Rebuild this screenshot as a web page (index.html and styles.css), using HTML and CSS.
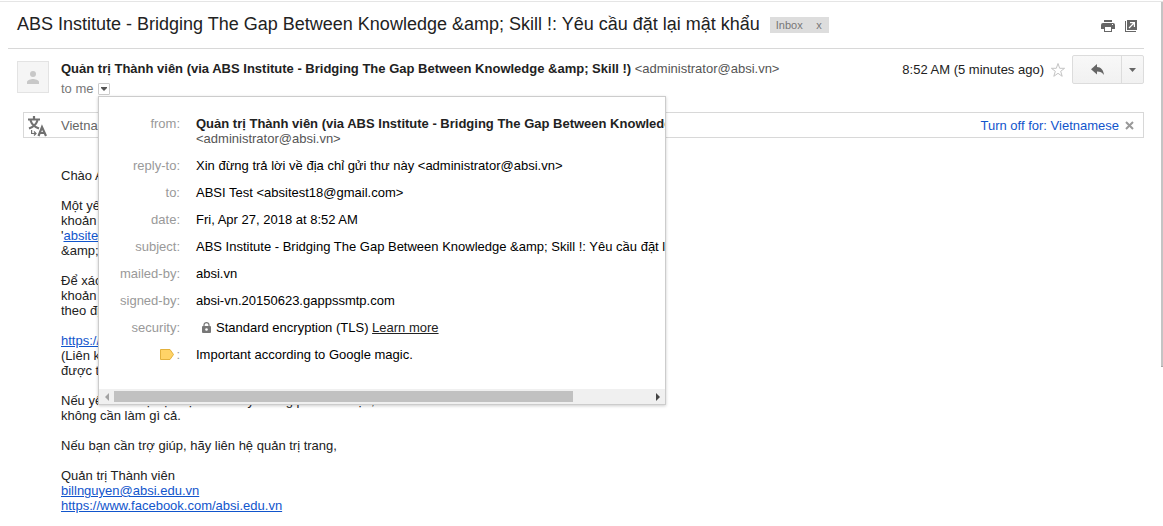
FILE: index.html
```html
<!DOCTYPE html>
<html lang="en">
<head>
<meta charset="utf-8">
<title>Mail message</title>
<link rel="stylesheet" href="styles.css">
</head>
<body>
<div class="pane">
<main class="thread">
  <header class="subject-bar">
    <h1 class="subject">ABS Institute - Bridging The Gap Between Knowledge &amp;amp; Skill !: Yêu cầu đặt lại mật khẩu</h1>
    <span class="label">Inbox <button class="label-remove" type="button" aria-label="Remove label">x</button></span>
    <div class="tools">
      <button class="icon-button" type="button" aria-label="Print">
        <svg width="14" height="12" viewBox="0 0 14 12"><path fill="#666" d="M3 0h8v2H3zM2 3h10a2 2 0 0 1 2 2v4h-3V6H3v3H0V5a2 2 0 0 1 2-2z"/><path fill="#fff" d="M11 4h1v1h-1z"/><path fill="#666" fill-rule="evenodd" d="M3 6h8v6H3zM4 7v4h6V7z"/></svg>
      </button>
      <button class="icon-button" type="button" aria-label="Open in new window">
        <svg width="12" height="12" viewBox="0 0 12 12"><path fill="#666" d="M0 1h1v10h10v1H0zM2 0h10v10H2z"/><path fill="none" stroke="#fff" stroke-width="1.2" d="M4 8l5-5M5 2.6h4.4V7"/></svg>
      </button>
    </div>
  </header>

  <section class="message">
    <div class="avatar">
      <svg width="12" height="13" viewBox="0 0 12 13"><circle cx="6" cy="3" r="3" fill="#c8c8c8"/><path fill="#c8c8c8" d="M0 13v-2c0-2 4-3 6-3s6 1 6 3v2z"/></svg>
    </div>
    <div class="sender">
      <div class="sender-line"><b>Quản trị Thành viên (via ABS Institute - Bridging The Gap Between Knowledge &amp;amp; Skill !)</b> <span class="address">&lt;administrator@absi.vn&gt;</span></div>
      <div class="recipient">to me
        <button class="details-toggle" type="button" aria-label="Show details"><svg width="6" height="4" viewBox="0 0 6 4"><path fill="#555" d="M0 0h6v1L3 4 0 1z"/></svg></button>
        <div class="details">
          <dl class="fields">
            <dt>from:</dt><dd><b>Quản trị Thành viên (via ABS Institute - Bridging The Gap Between Knowledge &amp;amp; Skill !)</b><br><span class="address">&lt;administrator@absi.vn&gt;</span></dd>
            <dt>reply-to:</dt><dd>Xin đừng trả lời về địa chỉ gửi thư này &lt;administrator@absi.vn&gt;</dd>
            <dt>to:</dt><dd>ABSI Test &lt;absitest18@gmail.com&gt;</dd>
            <dt>date:</dt><dd>Fri, Apr 27, 2018 at 8:52 AM</dd>
            <dt>subject:</dt><dd>ABS Institute - Bridging The Gap Between Knowledge &amp;amp; Skill !: Yêu cầu đặt lại mật khẩu</dd>
            <dt>mailed-by:</dt><dd>absi.vn</dd>
            <dt>signed-by:</dt><dd>absi-vn.20150623.gappssmtp.com</dd>
            <dt>security:</dt><dd class="security"><svg width="9" height="11" viewBox="0 0 9 11"><path fill="none" stroke="#777" stroke-width="1.2" d="M2 5V3a2.5 2.4 0 0 1 5 0v2"/><rect y="4" width="9" height="7" rx="1" fill="#777"/><circle cx="4.5" cy="7.5" r="1.3" fill="#fff"/></svg><span>Standard encryption (TLS) <a href="#">Learn more</a></span></dd>
            <dt class="marker"><svg width="14" height="11" viewBox="0 0 14 11"><path fill="#ffd367" stroke="#e3b13c" d="M.5.5H10l3.5 5-3.5 5H.5z"/></svg><span>:</span></dt><dd>Important according to Google magic.</dd>
          </dl>
          <div class="scrollbar">
            <svg width="4" height="8" viewBox="0 0 4 8"><path fill="#a3a3a3" d="M4 0v8L0 4z"/></svg>
            <div class="track"><div class="thumb"></div></div>
            <svg width="4" height="8" viewBox="0 0 4 8"><path fill="#444" d="M0 0v8l4-4z"/></svg>
          </div>
        </div>
      </div>
    </div>
    <div class="actions">
      <time>8:52 AM (5 minutes ago)</time>
      <button class="icon-button star" type="button" aria-label="Star"><svg width="16" height="16" viewBox="0 0 16 16"><path fill="#fff" stroke="#c4c4c4" d="M8 1.5l1.7 4.8h4.9l-3.9 3 1.5 5L8 11.3l-4.2 3 1.5-5-3.9-3h4.9z"/></svg></button>
      <div class="split">
        <button class="reply" type="button" aria-label="Reply"><svg width="13" height="12" viewBox="0 0 13 12"><path fill="#666" d="M6 0v3c4 0 6.5 3 7 8-1.500-2.500-4-3.500-7-3.500v3L0 5.200z"/></svg></button>
        <button class="more" type="button" aria-label="More"><svg width="7" height="4" viewBox="0 0 7 4"><path fill="#666" d="M0 0h7L3.500 4z"/></svg></button>
      </div>
    </div>
  </section>

  <div class="translate">
    <svg class="translate-icon" width="19" height="21" viewBox="0 0 19 21"><g fill="none" stroke="#707070" stroke-width="2.200"><path d="M0 3.500h12M6 0v3.500M2.500 4.500C4 9 7 11 11 12.500M9.500 4.500C8 9 5 11 1 12.500"/><path stroke-width="1.200" d="M3.600 14v3.500h4M6 15.500l2 2-2 2"/><path d="M10.500 20l3.500-9 4 9M11.500 17h5"/></g></svg>
    <span class="language">Vietnamese</span>
    <a class="turn-off" href="#">Turn off for: Vietnamese</a>
    <button class="icon-button" type="button" aria-label="Close"><svg width="9" height="9" viewBox="0 0 9 9"><path stroke="#999" stroke-width="2" d="M1 1l7 7M8 1L1 8"/></svg></button>
  </div>

  <article class="body">
    <p>Chào ABSI Test,</p>
    <p>Một yêu cầu đặt lại mật khẩu đã được gửi cho tài<br>khoản của bạn<br>'<a href="#">absitest18@gmail.com</a>' tại ABS Institute<br>&amp;amp; Skill !.</p>
    <p>Để xác nhận yêu cầu này và đặt mật khẩu cho tài<br>khoản của bạn, vui lòng truy cập<br>theo địa chỉ sau:</p>
    <p><a href="#">https://absi.vn/login/forgot</a><br>(Liên kết này có hiệu lực trong 30 phút từ khi<br>được tạo)</p>
    <p>Nếu yêu cầu đặt lại mật khẩu này không phải của bạn,<br>không cần làm gì cả.</p>
    <p>Nếu bạn cần trợ giúp, hãy liên hệ quản trị trang,</p>
    <p>Quản trị Thành viên<br><a href="#">billnguyen@absi.edu.vn</a><br><a href="#">https://www.facebook.com/absi.edu.vn</a></p>
  </article>
</main>
<div class="page-scroll"></div>
</div>
</body>
</html>
```
FILE: styles.css
```css
* { box-sizing: border-box; }
body {
  margin: 0;
  background: #fff;
  color: #222;
  font: 13px/15px "Liberation Sans", Arial, sans-serif;
}
button { border: 0; padding: 0; background: none; font: inherit; color: inherit; cursor: pointer; }
svg { display: block; flex: none; }
a { color: #15c; }
.pane { display: flex; align-items: flex-start; margin-top: 1px; border-top: 1px solid #e5e5e5; }
.page-scroll { width: 2px; height: 365px; background: #c4c4c4; border-bottom: 1px solid #a8a8a8; }
.thread { flex: 1; min-width: 0; padding: 0 17px 0 8px; }

.subject-bar { display: flex; align-items: center; height: 47px; padding: 0 7px 0 9px; border-bottom: 1px solid #d8d8d8; }
.subject { margin: 0; padding-bottom: 2px; font-size: 18px; line-height: 24px; font-weight: normal; white-space: nowrap; }
.label { display: flex; justify-content: space-between; width: 59px; margin-left: 10px; padding: 0 7px 0 6px; background: #ddd; color: #777; font-size: 11px; line-height: 16px; }
.tools { display: flex; gap: 10px; margin-left: auto; padding-top: 2px; }
.icon-button { display: block; }

.message { display: flex; align-items: flex-start; padding: 6px 0 0 9px; }
.avatar { display: flex; align-items: center; justify-content: center; width: 32px; height: 32px; margin-top: 6px; border: 1px solid #e3e3e3; background: #f5f5f5; }
.sender { flex: 1; min-width: 0; padding: 6px 0 0 12px; }
.sender-line { white-space: nowrap; }
.address { color: #555; }
.recipient { position: relative; display: flex; align-items: center; gap: 4px; margin-top: 5px; color: #777; }
.details-toggle { display: flex; align-items: center; justify-content: center; width: 12px; height: 12px; border: 1px solid #ccc; border-radius: 1px; }
.actions { display: flex; align-items: center; }
.star { margin: 0 6px; }
.split { display: flex; height: 29px; border: 1px solid #dcdcdc; border-radius: 2px; background: linear-gradient(#f8f8f8, #f1f1f1); }
.reply, .more { display: flex; align-items: center; justify-content: center; }
.reply { width: 48px; }
.more { width: 22px; border-left: 1px solid #dcdcdc; }

.details {
  position: absolute; z-index: 2; top: 15px; left: 37px;
  width: 568px; overflow: hidden;
  background: #fff; border: 1px solid #ccc;
  box-shadow: 0 1px 3px rgba(0, 0, 0, .2);
  color: #000;
}
.fields { display: grid; grid-template-columns: 81px 1fr; column-gap: 16px; row-gap: 12px; margin: 0; padding: 19px 0 27px; white-space: nowrap; }
.fields dt { text-align: right; color: #999; }
.fields dd { margin: 0; min-width: 0; }
.fields b { color: #222; }
.fields a { color: #222; }
.security { display: flex; align-items: center; gap: 5px; padding-left: 6px; }
.marker { display: flex; align-items: center; justify-content: flex-end; gap: 2px; }
.scrollbar { display: flex; align-items: center; justify-content: space-between; height: 15px; padding: 0 5px 0 6px; background: #f0f0f0; }
.track { flex: 1; margin: 0 5px; }
.thumb { width: 85.5%; height: 11px; background: #c1c1c1; }

.translate { display: flex; align-items: center; height: 26px; margin: 16px 0 0 15px; padding: 0 9px 0 4px; border: 1px solid #d8d8d8; color: #666; }
.translate-icon { margin-top: 2px; }
.language { margin-left: 14px; }
.turn-off { margin: 0 6px 0 auto; text-decoration: none; }

.body { padding: 30px 0 12px 53px; }
.body p { margin: 0 0 15px; }
```
